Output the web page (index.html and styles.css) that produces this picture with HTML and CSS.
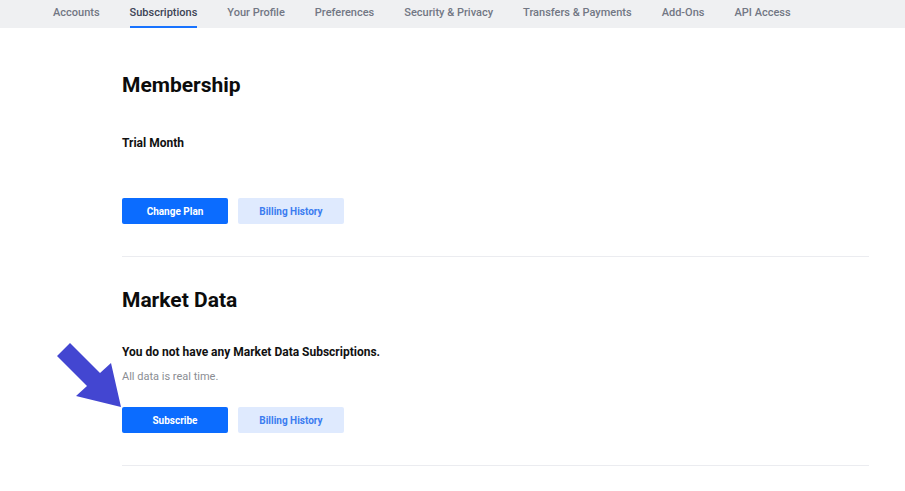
FILE: index.html
```html
<!DOCTYPE html>
<html lang="en">
<head>
    <meta charset="UTF-8">
    <title>Subscriptions</title>
    <link rel="stylesheet" href="styles.css">
</head>
<body>
    <div class="tabs">
        <a class="tab">Accounts</a>
        <a class="tab active">Subscriptions</a>
        <a class="tab">Your Profile</a>
        <a class="tab">Preferences</a>
        <a class="tab">Security &amp; Privacy</a>
        <a class="tab">Transfers &amp; Payments</a>
        <a class="tab">Add-Ons</a>
        <a class="tab">API Access</a>
    </div>
    <div class="content">
        <div class="section first">
            <h2 class="section-title">Membership</h2>
            <div class="plan-name">Trial Month</div>
            <div class="buttons">
                <button class="btn btn-primary">Change Plan</button>
                <button class="btn btn-light">Billing History</button>
            </div>
        </div>
        <div class="section">
            <h2 class="section-title">Market Data</h2>
            <div class="plan-name">You do not have any Market Data Subscriptions.</div>
            <div class="note">All data is real time.</div>
            <div class="buttons">
                <button class="btn btn-primary">Subscribe</button>
                <button class="btn btn-light">Billing History</button>
            </div>
        </div>
    </div>
    <svg class="pointer" width="80" height="80" viewBox="50 335 80 80" aria-hidden="true">
        <polygon points="70,343 100,373 111,363 121,407 76,396 87,386 57,356" fill="#4346d1"/>
    </svg>
</body>
</html>
```

FILE: styles.css
```css
body {
    margin: 0;
    padding: 0;
    background-color: #ffffff;
    font-family: Roboto, "Liberation Sans", sans-serif;
    color: #111111;
    position: relative;
}
.tabs {
    display: flex;
    gap: 30px;
    height: 28px;
    padding-left: 53px;
    background-color: #eff0f2;
}
.tab {
    box-sizing: border-box;
    height: 28px;
    padding-top: 6px;
    line-height: 14px;
    font-size: 11px;
    font-weight: 500;
    color: #727784;
    border-bottom: 2px solid transparent;
    cursor: pointer;
}
.tab.active {
    color: #3d4455;
    border-bottom-color: #1873ff;
}
.content {
    width: 747px;
    margin-left: 122px;
}
.section {
    padding: 30px 0 32px;
    border-bottom: 1px solid #ebecf0;
}
.section.first {
    padding-top: 44px;
}
.section-title {
    margin: 0;
    font-size: 21px;
    line-height: 26px;
    font-weight: 700;
    color: #0c0c0c;
}
.plan-name {
    margin-top: 31px;
    font-size: 12px;
    line-height: 16px;
    font-weight: 700;
}
.first .plan-name {
    margin-top: 37px;
}
.note {
    margin-top: 10px;
    font-size: 11px;
    line-height: 14px;
    color: #8a8d93;
}
.buttons {
    display: flex;
    gap: 10px;
    margin-top: 23px;
}
.first .buttons {
    margin-top: 47px;
}
.btn {
    width: 106px;
    height: 26px;
    border: none;
    border-radius: 2px;
    font-family: Roboto, "Liberation Sans", sans-serif;
    font-size: 10px;
    font-weight: 700;
    cursor: pointer;
}
.btn-primary {
    background-color: #0b6cff;
    color: #ffffff;
}
.btn-light {
    background-color: #dfeafe;
    color: #3b7cf0;
}
.pointer {
    position: absolute;
    left: 50px;
    top: 335px;
}
```
